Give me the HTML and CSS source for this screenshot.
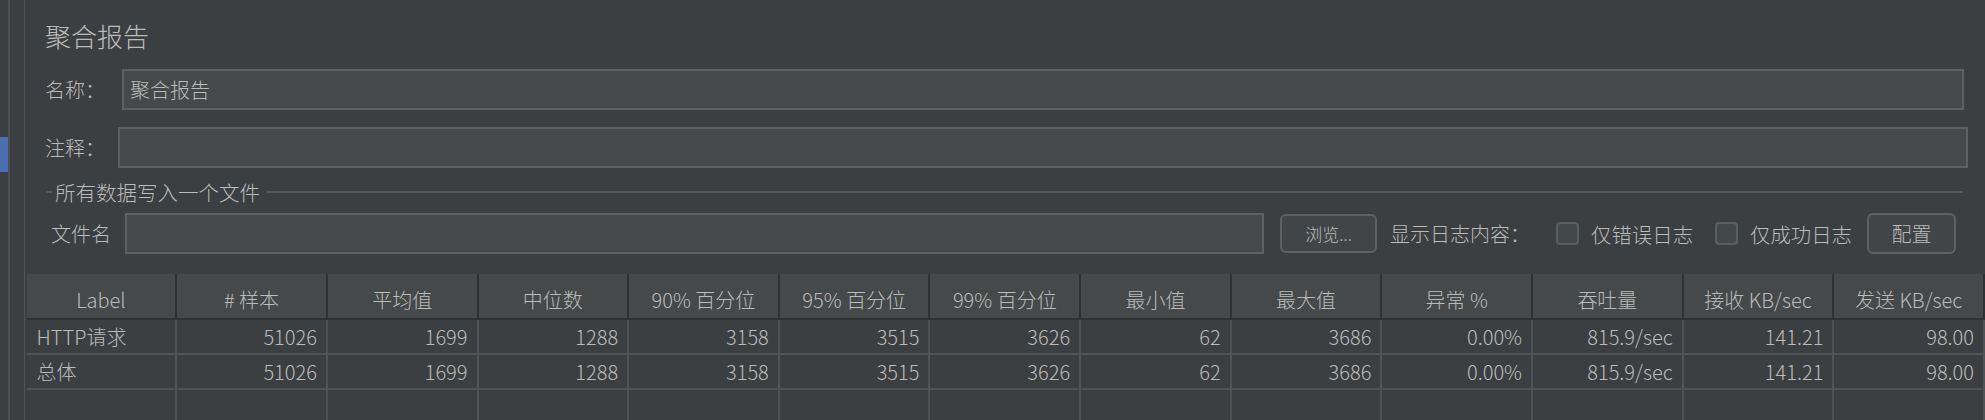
FILE: index.html
```html
<!DOCTYPE html>
<html lang="zh">
<head>
<meta charset="utf-8">
<title>聚合报告</title>
<link rel="stylesheet" href="styles.css">
</head>
<body>
<div class="app">
  <div class="gutter">
    <div class="gutter-strip"><div class="gutter-marker"></div></div>
    <div class="gutter-line wide"></div>
    <div class="gutter-pad"></div>
    <div class="gutter-line"></div>
  </div>
  <div class="main">
    <div class="title">聚合报告</div>
    <div class="form-row name-row">
      <label class="form-label name-label">名称：</label>
      <div class="text-field">聚合报告</div>
    </div>
    <div class="form-row comment-row">
      <label class="form-label comment-label">注释：</label>
      <div class="text-field"></div>
    </div>
    <div class="legend"><span class="legend-text">所有数据写入一个文件</span></div>
    <div class="file-row">
      <label class="form-label file-label">文件名</label>
      <div class="text-field file-field"></div>
      <button class="btn browse-btn">浏览...</button>
      <span class="log-label">显示日志内容：</span>
      <span class="checkbox first"></span>
      <span class="check-text">仅错误日志</span>
      <span class="checkbox"></span>
      <span class="check-text">仅成功日志</span>
      <button class="btn config-btn">配置</button>
    </div>
    <div class="table">
      <div class="th">Label</div>
      <div class="th"># 样本</div>
      <div class="th">平均值</div>
      <div class="th">中位数</div>
      <div class="th">90% 百分位</div>
      <div class="th">95% 百分位</div>
      <div class="th">99% 百分位</div>
      <div class="th">最小值</div>
      <div class="th">最大值</div>
      <div class="th">异常 %</div>
      <div class="th">吞吐量</div>
      <div class="th">接收 KB/sec</div>
      <div class="th">发送 KB/sec</div>

      <div class="td text">HTTP请求</div>
      <div class="td">51026</div>
      <div class="td">1699</div>
      <div class="td">1288</div>
      <div class="td">3158</div>
      <div class="td">3515</div>
      <div class="td">3626</div>
      <div class="td">62</div>
      <div class="td">3686</div>
      <div class="td">0.00%</div>
      <div class="td">815.9/sec</div>
      <div class="td">141.21</div>
      <div class="td">98.00</div>

      <div class="td text">总体</div>
      <div class="td">51026</div>
      <div class="td">1699</div>
      <div class="td">1288</div>
      <div class="td">3158</div>
      <div class="td">3515</div>
      <div class="td">3626</div>
      <div class="td">62</div>
      <div class="td">3686</div>
      <div class="td">0.00%</div>
      <div class="td">815.9/sec</div>
      <div class="td">141.21</div>
      <div class="td">98.00</div>

      <div class="td empty"></div>
      <div class="td empty"></div>
      <div class="td empty"></div>
      <div class="td empty"></div>
      <div class="td empty"></div>
      <div class="td empty"></div>
      <div class="td empty"></div>
      <div class="td empty"></div>
      <div class="td empty"></div>
      <div class="td empty"></div>
      <div class="td empty"></div>
      <div class="td empty"></div>
      <div class="td empty"></div>
    </div>
  </div>
</div>
</body>
</html>
```

FILE: styles.css
```css
* {
  box-sizing: border-box;
}

html, body {
  margin: 0;
  padding: 0;
  background: #3c3f41;
}

body {
  font-family: "Noto Sans CJK SC", "Noto Sans", sans-serif;
  font-weight: 300;
  font-size: 20px;
  color: #bbbbbb;
  width: 1985px;
  height: 420px;
  overflow: hidden;
}

.app {
  display: flex;
  height: 420px;
}

/* left gutter */
.gutter {
  display: flex;
  width: 26.6px;
  flex: none;
}

.gutter-strip {
  width: 8px;
  padding-top: 137px;
}

.gutter-marker {
  height: 35px;
  background: #4b6eaf;
}

.gutter-line {
  width: 1px;
  background: #505355;
}

.gutter-line.wide {
  width: 2px;
}

.gutter-pad {
  width: 14px;
}

/* main panel */
.main {
  flex: 1;
  display: flex;
  flex-direction: column;
  min-width: 0;
}

.title {
  height: 69px;
  padding-top: 2px;
  padding-left: 18.4px;
  font-size: 26px;
  line-height: 67px;
}

.form-row {
  display: flex;
  align-items: center;
  height: 41px;
}

.form-label {
  flex: none;
  padding-left: 18.4px;
  line-height: 24px;
}

.name-label {
  width: 95.4px;
}

.comment-label {
  width: 91.4px;
}

.name-row {
  margin-right: 21px;
}

.comment-row {
  margin-top: 17px;
  margin-right: 17px;
}

.text-field {
  flex: 1;
  height: 41px;
  background: #45494a;
  border: 2px solid #5e6162;
  padding-left: 6px;
  line-height: 37px;
  font-size: 20px;
}

/* titled border */
.legend {
  display: flex;
  align-items: center;
  height: 24px;
  margin-top: 12px;
  margin-left: 19.4px;
  margin-right: 22px;
}

.legend::before {
  content: "";
  width: 6px;
  height: 2px;
  background: #56595b;
  flex: none;
}

.legend::after {
  content: "";
  flex: 1;
  height: 2px;
  background: #56595b;
}

.legend-text {
  padding: 0 7px 0 3px;
  line-height: 24px;
  font-size: 20.5px;
}

/* file row */
.file-row {
  display: flex;
  align-items: center;
  height: 41px;
  margin-top: 9px;
  margin-right: 29px;
}

.file-label {
  width: 98.4px;
  padding-left: 24.4px;
}

.file-field {
  flex: 1;
}

.btn {
  flex: none;
  font-family: inherit;
  font-weight: 300;
  color: #bbbbbb;
  background: #414547;
  border: 2px solid #5e6162;
  border-radius: 6px;
  padding: 0;
}

.browse-btn {
  width: 97px;
  height: 39px;
  margin-left: 16px;
  font-size: 17px;
}

.config-btn {
  width: 89px;
  height: 41px;
  margin-left: 15px;
  font-size: 20px;
}

.log-label {
  margin-left: 13px;
  flex: none;
}

.checkbox {
  flex: none;
  width: 23px;
  height: 23px;
  border: 2px solid #5b5e60;
  border-radius: 4px;
  background: #43494a;
  margin-left: 22px;
  margin-right: 12px;
}

.checkbox.first {
  margin-left: 26px;
}

.check-text {
  flex: none;
  font-size: 20.4px;
}

/* table */
.table {
  margin-top: 20px;
  flex: 1;
  display: grid;
  grid-template-columns: repeat(13, 1fr);
  grid-template-rows: 46px 35px 35px 1fr;
}

.th {
  background: #45494a;
  border-right: 2px solid #2f3133;
  border-bottom: 2px solid #2f3133;
  display: flex;
  align-items: center;
  justify-content: center;
  padding-top: 6px;
  white-space: nowrap;
  font-size: 20px;
}

.td {
  border-right: 2px solid #505356;
  border-bottom: 2px solid #505356;
  display: flex;
  align-items: center;
  justify-content: flex-end;
  padding-right: 9px;
  white-space: nowrap;
  font-size: 20px;
}

.td.text {
  justify-content: flex-start;
  padding-left: 10px;
}

.td.empty {
  border-bottom: none;
}
```
